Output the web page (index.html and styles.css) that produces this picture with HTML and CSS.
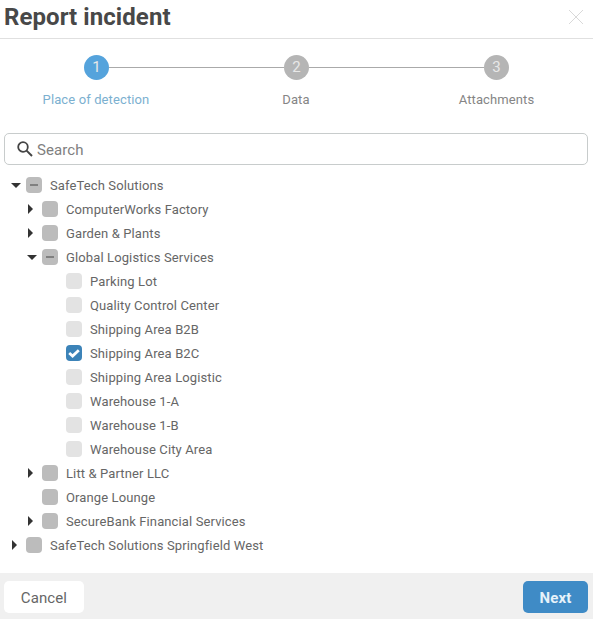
FILE: index.html
```html
<!DOCTYPE html>
<html>
<head>
    <title>Report incident</title>
    <link rel="stylesheet" href="styles.css">
</head>
<body>

<div class="dialog">
    <div class="header">
        <h1>Report incident</h1>
        <svg class="close" width="16" height="16" viewBox="0 0 16 16"><path d="M1 1L15 15M15 1L1 15" stroke="#d9d9d9" stroke-width="1" fill="none"/></svg>
    </div>

    <div class="stepper">
        <div class="step-track">
            <span class="step-num active">1</span>
            <span class="step-line"></span>
            <span class="step-num">2</span>
            <span class="step-line"></span>
            <span class="step-num">3</span>
        </div>
        <div class="step-labels">
            <span class="active">Place of detection</span>
            <span>Data</span>
            <span>Attachments</span>
        </div>
    </div>

    <div class="search">
        <svg width="18" height="18" viewBox="0 0 18 18"><circle cx="7" cy="7" r="4.8" stroke="#444" stroke-width="1.8" fill="none"/><path d="M10.6 10.6L16 16" stroke="#444" stroke-width="2" fill="none"/></svg>
        <span>Search</span>
    </div>

    <div class="tree">
        <div class="row lvl1"><span class="arrow open"></span><span class="box dark mixed"></span><span>SafeTech Solutions</span></div>
        <div class="row lvl2"><span class="arrow closed"></span><span class="box dark"></span><span>ComputerWorks Factory</span></div>
        <div class="row lvl2"><span class="arrow closed"></span><span class="box dark"></span><span>Garden &amp; Plants</span></div>
        <div class="row lvl2"><span class="arrow open"></span><span class="box dark mixed"></span><span>Global Logistics Services</span></div>
        <div class="row lvl3"><span class="box"></span><span>Parking Lot</span></div>
        <div class="row lvl3"><span class="box"></span><span>Quality Control Center</span></div>
        <div class="row lvl3"><span class="box"></span><span>Shipping Area B2B</span></div>
        <div class="row lvl3"><span class="box checked"><svg width="16" height="16" viewBox="0 0 16 16"><path d="M3.2 8L6.6 11L12.8 5.2" stroke="#fff" stroke-width="2.8" fill="none"/></svg></span><span>Shipping Area B2C</span></div>
        <div class="row lvl3"><span class="box"></span><span>Shipping Area Logistic</span></div>
        <div class="row lvl3"><span class="box"></span><span>Warehouse 1-A</span></div>
        <div class="row lvl3"><span class="box"></span><span>Warehouse 1-B</span></div>
        <div class="row lvl3"><span class="box"></span><span>Warehouse City Area</span></div>
        <div class="row lvl2"><span class="arrow closed"></span><span class="box dark"></span><span>Litt &amp; Partner LLC</span></div>
        <div class="row lvl2"><span class="arrow"></span><span class="box dark"></span><span>Orange Lounge</span></div>
        <div class="row lvl2"><span class="arrow closed"></span><span class="box dark"></span><span>SecureBank Financial Services</span></div>
        <div class="row lvl1"><span class="arrow closed"></span><span class="box dark"></span><span>SafeTech Solutions Springfield West</span></div>
    </div>

    <div class="footer">
        <button class="btn-cancel">Cancel</button>
        <button class="btn-next">Next</button>
    </div>
</div>

</body>
</html>
```

FILE: styles.css
```css
body {
    margin: 0;
    background: #fff;
    font-family: Roboto, Arial, sans-serif;
    color: #666;
}
.dialog {
    width: 593px;
    height: 619px;
    display: flex;
    flex-direction: column;
    overflow: hidden;
}
.header {
    height: 38px;
    flex: none;
    display: flex;
    align-items: center;
    justify-content: space-between;
    padding: 0 9px 0 4px;
    border-bottom: 1px solid #e0e0e0;
}
.header h1 {
    margin: 0 0 5px;
    font-size: 24px;
    font-weight: 700;
    letter-spacing: 0.07px;
    color: #484848;
}
.close {
    margin-bottom: 4px;
}
.stepper {
    padding-top: 16px;
}
.step-track {
    display: flex;
    align-items: center;
    padding-left: 84px;
}
.step-num {
    width: 25px;
    height: 25px;
    flex: none;
    border-radius: 50%;
    background: #b5b5b5;
    color: #e8e8e8;
    font-size: 15px;
    line-height: 25px;
    text-align: center;
}
.step-num.active {
    background: #55a3dc;
}
.step-line {
    width: 175px;
    height: 1px;
    background: #aaa;
}
.step-labels {
    display: grid;
    grid-template-columns: 192px 208px 193px;
    margin-top: 12px;
    font-size: 13px;
    line-height: 16px;
    letter-spacing: 0.12px;
    color: #858585;
    text-align: center;
}
.step-labels .active {
    color: #7bb0d0;
}
.search {
    height: 30px;
    flex: none;
    margin: 25px 5px 0 4px;
    padding-left: 11px;
    display: flex;
    align-items: center;
    gap: 3px;
    border: 1px solid #c8cccc;
    border-radius: 5px;
    font-size: 15px;
    letter-spacing: 0.08px;
    color: #808080;
}
.search span {
    padding-top: 2px;
}
.tree {
    flex: 1;
    padding-top: 8px;
    font-size: 13px;
    letter-spacing: 0.12px;
}
.row {
    height: 24px;
    display: flex;
    align-items: center;
}
.lvl1 {
    padding-left: 10px;
}
.lvl2 {
    padding-left: 26px;
}
.lvl3 {
    padding-left: 66px;
}
.arrow {
    width: 16px;
    flex: none;
    display: flex;
    justify-content: center;
}
.arrow.open::before {
    content: "";
    border-top: 5px solid #333;
    border-left: 5px solid transparent;
    border-right: 5px solid transparent;
    margin-right: 4px;
}
.arrow.closed::before {
    content: "";
    border-left: 5px solid #333;
    border-top: 5px solid transparent;
    border-bottom: 5px solid transparent;
    margin-right: 7px;
}
.box {
    width: 16px;
    height: 16px;
    flex: none;
    margin-right: 8px;
    border-radius: 4px;
    background: #e3e3e3;
    display: flex;
    align-items: center;
    justify-content: center;
}
.box.dark {
    background: #bcbcbc;
}
.box.mixed::before {
    content: "";
    width: 8px;
    height: 2px;
    background: #808080;
}
.box.checked {
    background: #3c83b8;
}
.footer {
    height: 46px;
    flex: none;
    display: flex;
    align-items: center;
    justify-content: space-between;
    padding: 2px 5px 0 4px;
    box-sizing: border-box;
    background: #f0f0f0;
}
.footer button {
    height: 32px;
    padding: 2px 0 0;
    border: none;
    border-radius: 5px;
    font-family: Roboto, Arial, sans-serif;
    font-size: 15px;
    letter-spacing: 0.1px;
}
.btn-cancel {
    width: 80px;
    background: #fff;
    color: #666;
}
.btn-next {
    width: 65px;
    background: #3f8bc6;
    color: #e6f2fa;
    font-weight: 700;
}
```
